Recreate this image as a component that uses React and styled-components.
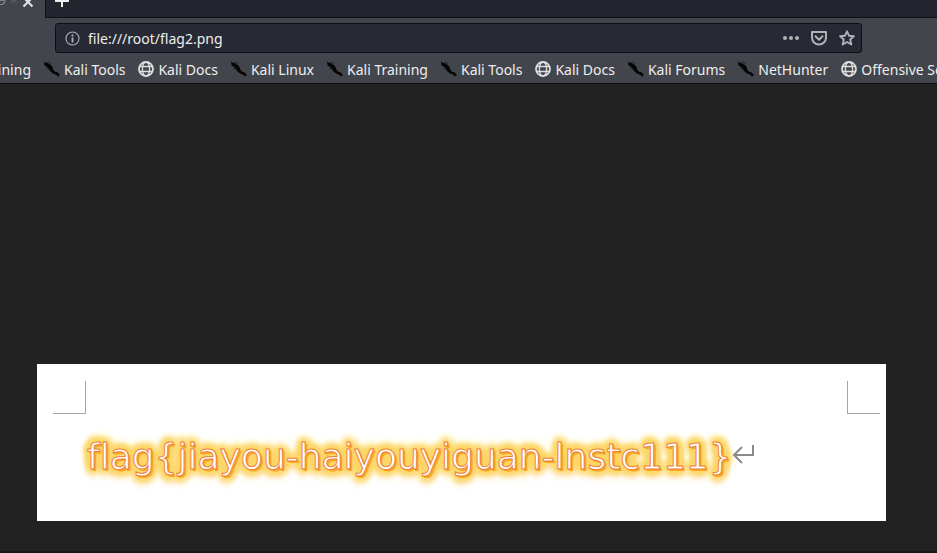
import React from "react";
import styled, { createGlobalStyle } from "styled-components";

const GlobalStyle = createGlobalStyle`
  * { box-sizing: border-box; }
  html, body, #root { height: 100%; }
  body {
    margin: 0;
    overflow: hidden;
    background: #222222;
    font-family: "Noto Sans", sans-serif;
    font-size: 14px;
    color: #eeeeee;
  }
`;

const Browser = styled.div`
  display: flex;
  flex-direction: column;
  height: 100%;
`;

const TabStrip = styled.div`
  display: flex;
  height: 18px;
  flex: none;
  overflow: hidden;
  background: #23252e;
`;

const Tab = styled.div`
  display: flex;
  align-items: flex-end;
  width: 45px;
  padding-bottom: 10px;
  gap: 4px;
  background: #43454c;
`;

const TabTitle = styled.span`
  display: flex;
  justify-content: flex-end;
  width: 18px;
  overflow: hidden;
  white-space: nowrap;
  line-height: 16px;
  color: #8a8c91;
  mask-image: linear-gradient(to right, #000 20%, rgba(0, 0, 0, 0.25));
`;

const IconButton = styled.button`
  display: flex;
  flex: none;
  padding: 0;
  border: 0;
  background: none;
  color: ${(p) => p.$color || "#b1b2b5"};
`;

const NewTabArea = styled.div`
  display: flex;
  align-items: flex-end;
  flex: 1;
  padding: 0 9px 9px;
  border-left: 1px solid #0f1014;
  border-bottom: 1px solid #0f1014;
`;

const Toolbar = styled.div`
  flex: none;
  padding: 5px 75px 4px 55px;
  background: #43454c;
`;

const AddressBar = styled.form`
  display: flex;
  align-items: center;
  height: 30px;
  padding: 0 6px 0 9px;
  border: 1px solid #0d0e12;
  border-radius: 3px;
  background: #272934;
`;

const AddressInput = styled.input`
  flex: 1;
  min-width: 0;
  height: 24px;
  margin-left: 8px;
  padding: 0;
  border: 0;
  outline: 0;
  background: transparent;
  color: #eeeeee;
  font: inherit;
`;

const Actions = styled.div`
  display: flex;
  gap: 12px;
`;

const BookmarksBar = styled.nav`
  display: flex;
  flex: none;
  gap: 13px;
  height: 27px;
  padding-bottom: 2px;
  overflow: hidden;
  border-bottom: 1px solid #0f1014;
  background: #43454c;
`;

const ScrolledItem = styled.div`
  display: flex;
  justify-content: flex-end;
  flex: none;
  width: 31px;
  overflow: hidden;
`;

const BookmarkLink = styled.a`
  display: flex;
  align-items: center;
  flex: none;
  gap: 4px;
  white-space: nowrap;
  color: #eeeeee;
  text-decoration: none;
`;

const Viewer = styled.main`
  display: flex;
  flex-direction: column;
  flex: 1;
  padding: 280px 51px 0 37px;
  border-bottom: 2px solid #17171a;
  background: #222222;
`;

const Paper = styled.article`
  padding: 17px 6px 34px 16px;
  background: #ffffff;
`;

const Margins = styled.div`
  display: flex;
  justify-content: space-between;
`;

const CropMark = styled.span`
  width: 33px;
  height: 33px;
  border-bottom: 1px solid #a5a5a5;
  border-left: ${(p) => (p.$side === "right" ? "1px solid #a5a5a5" : "0")};
  border-right: ${(p) => (p.$side === "left" ? "1px solid #a5a5a5" : "0")};
`;

const FlagLine = styled.p`
  display: flex;
  align-items: center;
  margin: 13px 0 0;
  padding-left: 34px;
  line-height: 60px;
  white-space: nowrap;
`;

const FlagText = styled.span`
  font-family: "DejaVu Sans", sans-serif;
  font-size: 36px;
  font-variant-ligatures: none;
  color: #ffffff;
  -webkit-text-stroke: 1px #ef8038;
  text-shadow:
    1px 1px 0 #f9a825,
    2px 2px 0 #f9a825,
    0 0 3px #fcd667,
    3px 0 3px #fcd667,
    -3px 0 3px #fcd667,
    0 3px 3px #fcd667,
    0 -3px 3px #fcd667,
    6px 0 5px #fcd667,
    -5px 0 5px #fcd667,
    0 6px 5px #fcd667,
    0 -5px 5px #fcd667,
    5px 5px 5px #fcd667,
    -4px 5px 5px #fcd667,
    5px -4px 5px #fcd667,
    -4px -4px 5px #fcd667,
    0 9px 7px #fddcae,
    0 -7px 7px #fcec9c;
`;

const MarkSvg = styled.svg`
  display: block;
  flex: none;
`;

function Kali() {
  return (
    <MarkSvg width="16" height="16" viewBox="0 0 16 16" aria-hidden="true">
      <path d="M0 0.500L2 2 3.500 1.800 5 3 7 4 8.500 6 9.500 9 11.500 11 13 11 16 14 14 15.500 12 13.500 9 12.500 6 10 4.500 7.500 2.500 5.500 0.500 4.500z" fill="#050505" />
      <path d="M3.500 0.800l4 1.700M2.500 7l2 1" stroke="#232427" strokeWidth="1" />
    </MarkSvg>
  );
}

function Globe() {
  return (
    <MarkSvg width="16" height="16" viewBox="0 0 16 16" fill="none" stroke="#dedede" aria-hidden="true">
      <circle cx="8" cy="8" r="7" strokeWidth="1.800" />
      <ellipse cx="8" cy="8" rx="3.600" ry="7" strokeWidth="1.300" />
      <path d="M1.500 5.500h13M1.500 10.500h13" strokeWidth="1.300" />
    </MarkSvg>
  );
}

const bookmarks = [
  ["Kali Tools", Kali],
  ["Kali Docs", Globe],
  ["Kali Linux", Kali],
  ["Kali Training", Kali],
  ["Kali Tools", Kali],
  ["Kali Docs", Globe],
  ["Kali Forums", Kali],
  ["NetHunter", Kali],
  ["Offensive Security", Globe],
];

export default function App() {
  return (
    <Browser>
      <GlobalStyle />
      <TabStrip>
        <Tab>
          <TabTitle>849 ×</TabTitle>
          <IconButton type="button" aria-label="Close tab" $color="#e6e6e7">
            <MarkSvg width="12" height="12" viewBox="0 0 12 12" fill="none" stroke="currentColor" strokeWidth="2">
              <path d="M1.500 1.500l9 9M10.500 1.500l-9 9" />
            </MarkSvg>
          </IconButton>
        </Tab>
        <NewTabArea>
          <IconButton type="button" aria-label="New tab" $color="#eeeeee">
            <MarkSvg width="14" height="14" viewBox="0 0 14 14" fill="none" stroke="currentColor" strokeWidth="2">
              <path d="M0 7h14M7 0v13" />
            </MarkSvg>
          </IconButton>
        </NewTabArea>
      </TabStrip>

      <Toolbar>
        <AddressBar onSubmit={(e) => e.preventDefault()}>
          <IconButton type="button" aria-label="Site information">
            <MarkSvg width="15" height="15" viewBox="0 0 15 15" fill="none" stroke="currentColor">
              <circle cx="7.500" cy="7.500" r="6.500" strokeWidth="1.100" />
              <path d="M7.500 6.500v5M7.500 3.500v2" strokeWidth="1.800" />
            </MarkSvg>
          </IconButton>
          <AddressInput aria-label="Address" defaultValue="file:///root/flag2.png" />
          <Actions>
            <IconButton type="button" aria-label="Page actions">
              <MarkSvg width="16" height="16" viewBox="0 0 16 16" fill="currentColor">
                <circle cx="2" cy="8" r="2" />
                <circle cx="8" cy="8" r="2" />
                <circle cx="14" cy="8" r="2" />
              </MarkSvg>
            </IconButton>
            <IconButton type="button" aria-label="Save to Pocket">
              <MarkSvg width="16" height="16" viewBox="0 0 16 16" fill="none" stroke="currentColor" strokeWidth="2" strokeLinecap="round" strokeLinejoin="round">
                <path d="M1 2h14v5.500a7 7 0 0 1-14 0z" />
                <path d="M4.500 6.300L8 9.700l3.500-3.400" />
              </MarkSvg>
            </IconButton>
            <IconButton type="button" aria-label="Bookmark this page">
              <MarkSvg width="16" height="16" viewBox="0 0 16 16" fill="none" stroke="currentColor" strokeWidth="1.900" strokeLinejoin="round">
                <path d="M8 1.300l2 4.400 4.900.5-3.700 3.300 1.100 5L8 12l-4.300 2.500 1.100-5L1.100 6.200 6 5.700z" />
              </MarkSvg>
            </IconButton>
          </Actions>
        </AddressBar>
      </Toolbar>

      <BookmarksBar aria-label="Bookmarks">
        <ScrolledItem>
          <BookmarkLink href="#training">Kali Training</BookmarkLink>
        </ScrolledItem>
        {bookmarks.map(([label, Icon], i) => (
          <BookmarkLink href="#bookmark" key={i}>
            <Icon />
            {label}
          </BookmarkLink>
        ))}
      </BookmarksBar>

      <Viewer>
        <Paper>
          <Margins>
            <CropMark $side="left" />
            <CropMark $side="right" />
          </Margins>
          <FlagLine>
            <FlagText>{"flag{jiayou-haiyouyiguan-lnstc111}"}</FlagText>
            <MarkSvg width="24" height="24" viewBox="0 0 24 24" fill="none" stroke="#8c8a86" strokeWidth="2" aria-hidden="true">
              <path d="M21 0v10H2M10 2l-8 8 8 8" />
            </MarkSvg>
          </FlagLine>
        </Paper>
      </Viewer>
    </Browser>
  );
}
